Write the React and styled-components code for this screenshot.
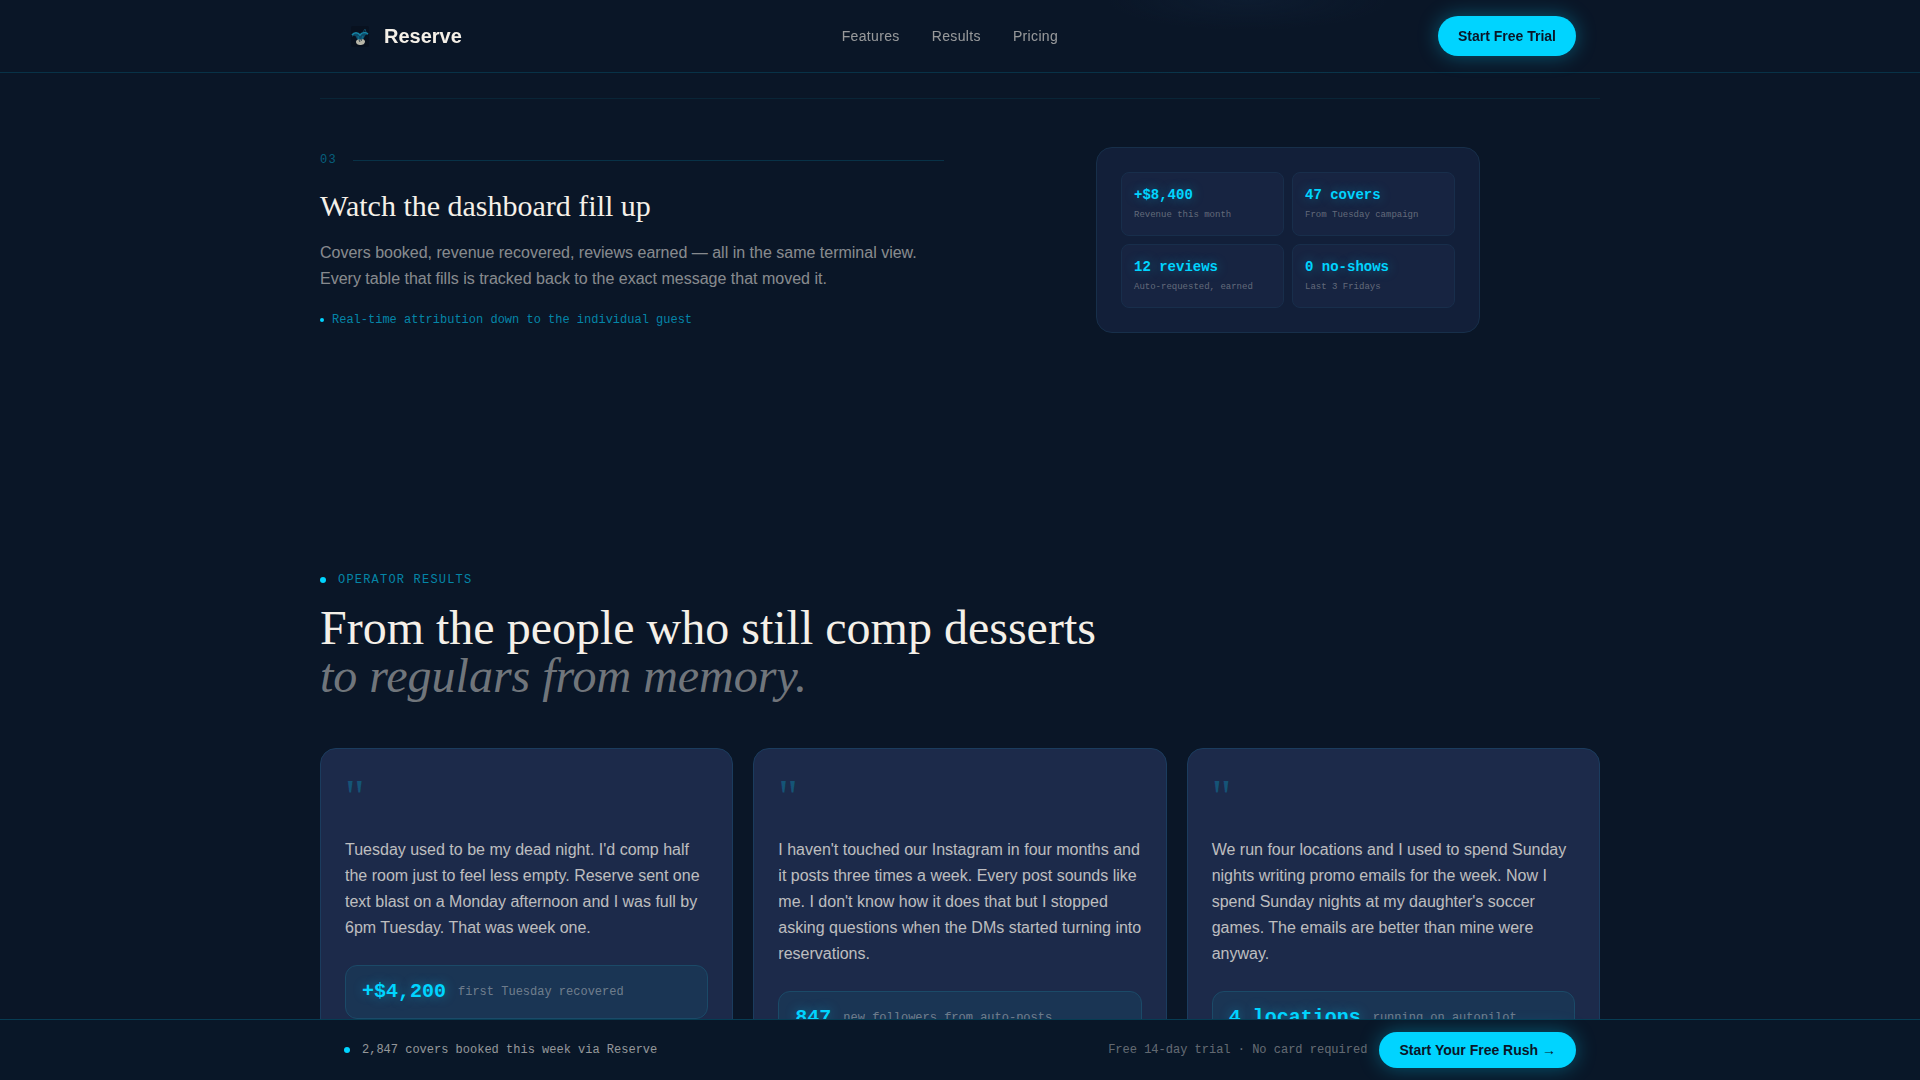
import React from 'react'
import styled, { createGlobalStyle, ThemeProvider } from 'styled-components'

const theme = {
  color: {
    bg: '#0a1627',
    cyan: '#00d4ff',
    ink: '#0a1628',
    cream: '#f5f0e8',
    card: '#1c2a4a'
  },
  font: {
    sans: '"Liberation Sans", Arial, sans-serif',
    serif: '"Liberation Serif", "Times New Roman", serif',
    mono: '"Liberation Mono", "Courier New", monospace'
  }
}

const GlobalStyle = createGlobalStyle`
  *, *::before, *::after {
    box-sizing: border-box;
  }

  body, h2, h3, p, ul, blockquote {
    margin: 0;
    padding: 0;
  }

  body {
    background: ${({ theme }) => theme.color.bg};
    color: ${({ theme }) => theme.color.cream};
    font-family: ${({ theme }) => theme.font.sans};
    font-size: 16px;
    line-height: 26px;
  }

  ul {
    list-style: none;
  }
`

const Container = styled.div`
  max-width: 1280px;
  margin: 0 auto;
`

const Header = styled.header`
  position: fixed;
  top: 0;
  left: 0;
  right: 0;
  z-index: 10;
  background: radial-gradient(ellipse 140px 30px at 65% 0, rgba(20, 40, 66, 0.3), transparent), ${({ theme }) => theme.color.bg};
  border-bottom: 1px solid rgba(0, 212, 255, 0.15);
`

const HeaderInner = styled(Container)`
  display: flex;
  align-items: center;
  justify-content: space-between;
  padding: 16px 24px;
`

const Brand = styled.a`
  display: flex;
  align-items: center;
  gap: 8px;
  color: ${({ theme }) => theme.color.cream};
  font-size: 20px;
  font-weight: 700;
  text-decoration: none;
`

const Nav = styled.nav`
  display: flex;
  gap: 32px;
`

const NavLink = styled.a`
  color: rgba(245, 240, 232, 0.6);
  font-size: 14px;
  line-height: 20px;
  letter-spacing: 0.025em;
  text-decoration: none;
`

const Cta = styled.button`
  height: ${({ $compact }) => ($compact ? '36px' : '40px')};
  padding: 0 20px;
  border: 0;
  border-radius: 20px;
  background: ${({ theme }) => theme.color.cyan};
  box-shadow: 0 0 20px rgba(0, 212, 255, 0.35);
  color: ${({ theme }) => theme.color.ink};
  font-family: inherit;
  font-size: 14px;
  font-weight: 700;
  white-space: nowrap;
  cursor: pointer;
`

const Main = styled.main`
  padding: 98px 0 120px;
`

const Step = styled.section`
  display: grid;
  grid-template-columns: 1fr 1fr;
  gap: 32px;
  align-items: center;
  padding: 48px 0;
  border-top: 1px solid rgba(0, 212, 255, 0.08);
`

const StepNumber = styled.div`
  display: flex;
  align-items: center;
  gap: 16px;
  color: rgba(0, 212, 255, 0.4);
  font-family: ${({ theme }) => theme.font.mono};
  font-size: 12px;
  line-height: 16px;
  letter-spacing: 0.1em;

  &::after {
    content: '';
    flex: 1;
    height: 1px;
    background: rgba(0, 212, 255, 0.15);
  }
`

const StepTitle = styled.h3`
  margin: 20px 0 16px;
  font-family: ${({ theme }) => theme.font.serif};
  font-size: 30px;
  font-weight: 400;
  line-height: 36px;
`

const StepText = styled.p`
  color: rgba(245, 240, 232, 0.55);
`

const Note = styled.p`
  display: flex;
  align-items: center;
  gap: 8px;
  margin-top: 20px;
  color: rgba(0, 212, 255, 0.6);
  font-family: ${({ theme }) => theme.font.mono};
  font-size: 12px;
  line-height: 16px;
`

const Dot = styled.span`
  flex: none;
  width: ${({ $size }) => $size}px;
  height: ${({ $size }) => $size}px;
  border-radius: 50%;
  background: ${({ theme }) => theme.color.cyan};
`

const Dashboard = styled.ul`
  justify-self: center;
  width: 100%;
  max-width: 384px;
  display: grid;
  grid-template-columns: 1fr 1fr;
  gap: 8px;
  padding: 24px;
  border: 1px solid #172f4a;
  border-radius: 16px;
  background: #121f39;
`

const Metric = styled.li`
  padding: 12px 12px 10px;
  border: 1px solid #182e4b;
  border-radius: 8px;
  background: #172441;
  font-family: ${({ theme }) => theme.font.mono};
`

const MetricValue = styled.p`
  color: ${({ theme }) => theme.color.cyan};
  font-size: 14px;
  font-weight: 700;
  line-height: 20px;
  text-shadow: 0 0 12px rgba(0, 212, 255, 0.4);
`

const MetricLabel = styled.p`
  color: rgba(245, 240, 232, 0.35);
  font-size: 9px;
  line-height: 20px;
`

const Results = styled.section`
  margin-top: 191px;
`

const Eyebrow = styled.p`
  display: flex;
  align-items: center;
  gap: 12px;
  margin-bottom: 16px;
  color: rgba(0, 212, 255, 0.6);
  font-family: ${({ theme }) => theme.font.mono};
  font-size: 12px;
  line-height: 16px;
  letter-spacing: 0.1em;
  text-transform: uppercase;
`

const ResultsTitle = styled.h2`
  margin-bottom: 48px;
  font-family: ${({ theme }) => theme.font.serif};
  font-size: 48px;
  font-weight: 400;
  line-height: 48px;

  em {
    display: block;
    color: rgba(245, 240, 232, 0.45);
  }
`

const Cards = styled.div`
  display: grid;
  grid-template-columns: repeat(3, 1fr);
  gap: 20px;
`

const Card = styled.article`
  padding: 24px;
  border: 1px solid #1b3c5e;
  border-radius: 16px;
  background: ${({ theme }) => theme.color.card};

  &::before {
    content: '"';
    display: block;
    margin-bottom: 16px;
    color: rgba(0, 212, 255, 0.25);
    font-family: ${({ theme }) => theme.font.serif};
    font-size: 48px;
    line-height: 48px;
  }
`

const Quote = styled.blockquote`
  color: rgba(245, 240, 232, 0.75);
`

const Outcome = styled.p`
  display: flex;
  align-items: center;
  gap: 12px;
  margin-top: 24px;
  padding: 12px 16px;
  border: 1px solid #1b4a68;
  border-radius: 12px;
  background: #1a3554;
  color: rgba(245, 240, 232, 0.4);
  font-family: ${({ theme }) => theme.font.mono};
  font-size: 12px;
  line-height: 28px;

  strong {
    color: ${({ theme }) => theme.color.cyan};
    font-size: 20px;
    text-shadow: 0 0 12px rgba(0, 212, 255, 0.4);
  }
`

const BottomBar = styled.aside`
  position: fixed;
  left: 0;
  right: 0;
  bottom: 0;
  z-index: 10;
  border-top: 1px solid rgba(0, 212, 255, 0.2);
  background: #091728;
`

const BottomInner = styled(Container)`
  display: flex;
  align-items: center;
  gap: 12px;
  padding: 12px 24px;
  color: rgba(245, 240, 232, 0.6);
  font-family: ${({ theme }) => theme.font.mono};
  font-size: 12px;
  line-height: 16px;

  button {
    font-family: ${({ theme }) => theme.font.sans};
  }
`

const Terms = styled.span`
  margin-left: auto;
  color: rgba(245, 240, 232, 0.4);
`

const metrics = [
  { value: '+$8,400', label: 'Revenue this month' },
  { value: '47 covers', label: 'From Tuesday campaign' },
  { value: '12 reviews', label: 'Auto-requested, earned' },
  { value: '0 no-shows', label: 'Last 3 Fridays' }
]

const stories = [
  {
    quote:
      "Tuesday used to be my dead night. I'd comp half the room just to feel less empty. Reserve sent one text blast on a Monday afternoon and I was full by 6pm Tuesday. That was week one.",
    value: '+$4,200',
    label: 'first Tuesday recovered'
  },
  {
    quote:
      "I haven't touched our Instagram in four months and it posts three times a week. Every post sounds like me. I don't know how it does that but I stopped asking questions when the DMs started turning into reservations.",
    value: '847',
    label: 'new followers from auto-posts'
  },
  {
    quote:
      "We run four locations and I used to spend Sunday nights writing promo emails for the week. Now I spend Sunday nights at my daughter's soccer games. The emails are better than mine were anyway.",
    value: '4 locations',
    label: 'running on autopilot'
  }
]

const Logo = () => (
  <svg width="32" height="32" viewBox="0 0 32 32" fill="none" aria-hidden="true">
    <rect x="7" y="6" width="18" height="21" rx="2" fill="#08111f" />
    <path d="M8 17c0-4 5-6 8-2 3-4 7-3 8 0-2-1-3 0-4 3l-2 3h-4l-2-4c-1-2-3-1-4 0z" fill="#0d4a68" />
    <path d="M8 15c2-3 6-3 8 0 2-3 6-3 8-1" stroke="#1685a5" strokeWidth="1.5" />
    <path d="M19 12l2-3 1 3" stroke="#124560" strokeWidth="1" />
    <path d="M14 16l1 4M19 16l-1 3" stroke="#0e6684" strokeWidth="1.5" />
    <path d="M12 22c0-2 2-3 4-2 2-2 4-1 5 1 0 3-2 4-5 4-2 0-4-1-4-3z" fill="#b8b6a8" />
    <path d="M15 20l1 2M18 19l-1 2" stroke="#34434b" strokeWidth="1" />
  </svg>
)

const App = () => (
  <ThemeProvider theme={theme}>
    <GlobalStyle />
    <Header>
      <HeaderInner>
        <Brand href="#">
          <Logo />
          Reserve
        </Brand>
        <Nav>
          <NavLink href="#features">Features</NavLink>
          <NavLink href="#results">Results</NavLink>
          <NavLink href="#pricing">Pricing</NavLink>
        </Nav>
        <Cta>Start Free Trial</Cta>
      </HeaderInner>
    </Header>

    <Main>
      <Container>
        <Step id="features">
          <div>
            <StepNumber>03</StepNumber>
            <StepTitle>Watch the dashboard fill up</StepTitle>
            <StepText>
              Covers booked, revenue recovered, reviews earned — all in the same terminal view. Every table that fills
              is tracked back to the exact message that moved it.
            </StepText>
            <Note>
              <Dot $size={4} />
              Real-time attribution down to the individual guest
            </Note>
          </div>
          <Dashboard>
            {metrics.map(({ value, label }) => (
              <Metric key={label}>
                <MetricValue>{value}</MetricValue>
                <MetricLabel>{label}</MetricLabel>
              </Metric>
            ))}
          </Dashboard>
        </Step>

        <Results id="results">
          <Eyebrow>
            <Dot $size={6} />
            Operator results
          </Eyebrow>
          <ResultsTitle>
            From the people who still comp desserts
            <em>to regulars from memory.</em>
          </ResultsTitle>
          <Cards>
            {stories.map(({ quote, value, label }) => (
              <Card key={label}>
                <Quote>{quote}</Quote>
                <Outcome>
                  <strong>{value}</strong>
                  {label}
                </Outcome>
              </Card>
            ))}
          </Cards>
        </Results>
      </Container>
    </Main>

    <BottomBar>
      <BottomInner>
        <Dot $size={6} />
        <span>2,847 covers booked this week via Reserve</span>
        <Terms>Free 14-day trial · No card required</Terms>
        <Cta $compact>Start Your Free Rush →</Cta>
      </BottomInner>
    </BottomBar>
  </ThemeProvider>
)

export default App
